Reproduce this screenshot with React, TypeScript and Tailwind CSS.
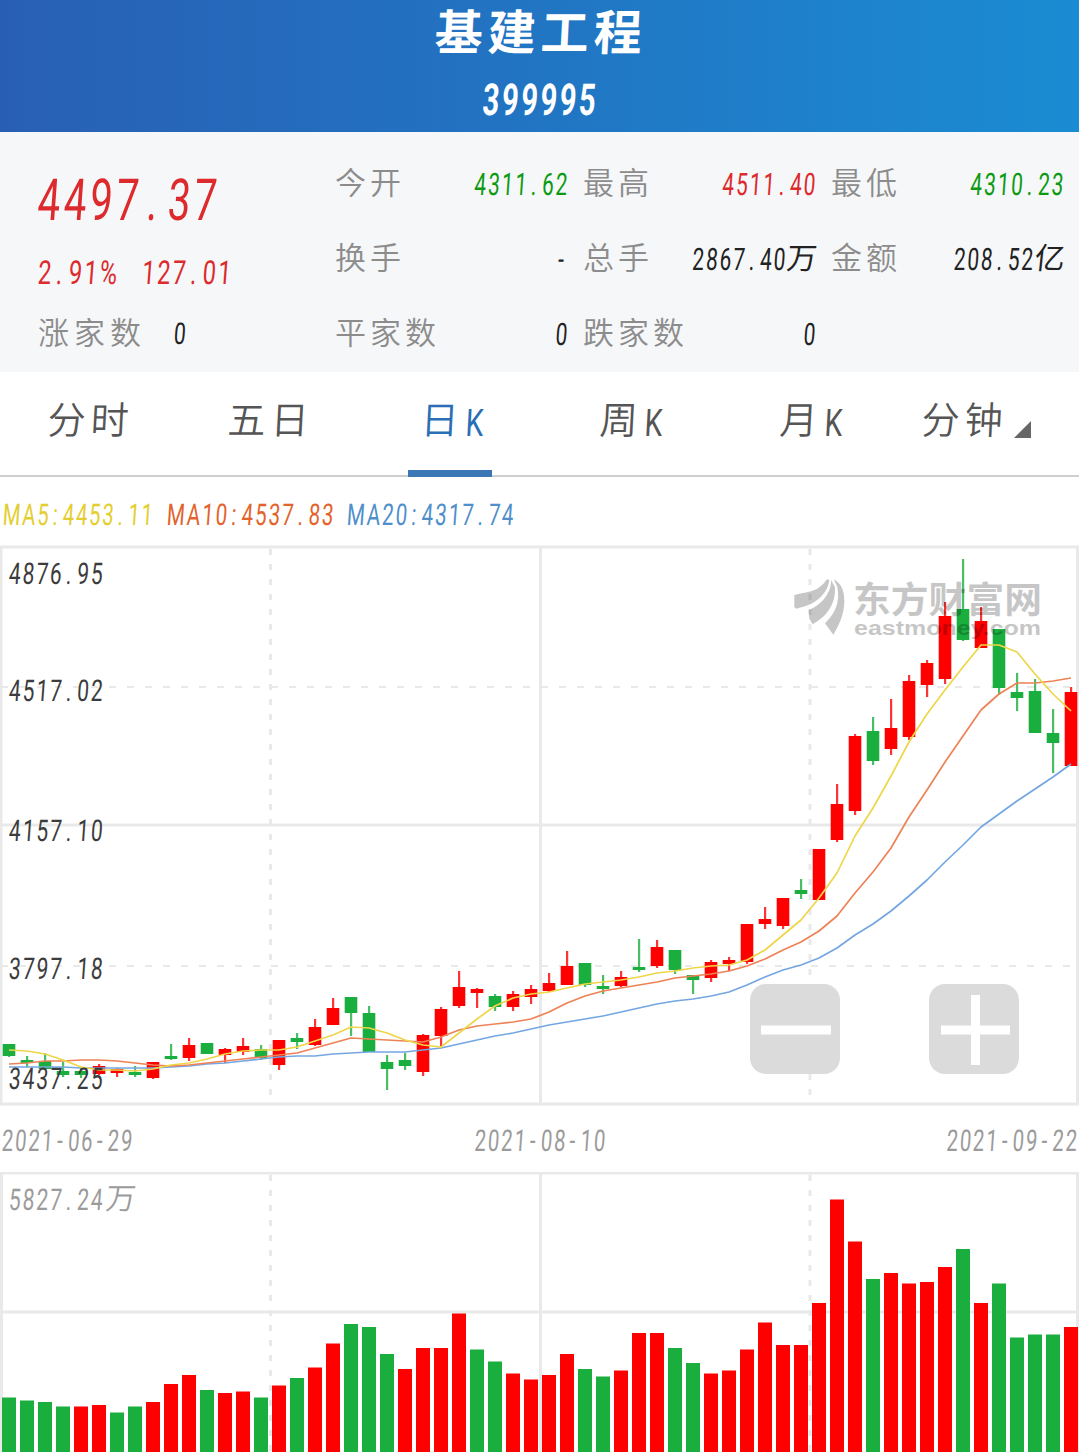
import { Fragment } from "react";
import clsx from "clsx";

type Candle = [color: string, high: number, top: number, bottom: number, low: number];

const RED = "#fe0000";
const GREEN = "#1aae3f";
const STEP = 18;

// y positions inside the page, one row per trading day
const candles: Candle[] = [
  ["G", 1044, 1044, 1056, 1057], ["G", 1056, 1060, 1063, 1067], ["G", 1053, 1061, 1069, 1069],
  ["G", 1062, 1071, 1075, 1077], ["G", 1067, 1071, 1075, 1078], ["R", 1064, 1066, 1074, 1075],
  ["R", 1068, 1069, 1073, 1077], ["G", 1066, 1072, 1075, 1077], ["R", 1062, 1062, 1078, 1079],
  ["G", 1044, 1056, 1059, 1060], ["R", 1038, 1045, 1058, 1061], ["G", 1043, 1043, 1054, 1054],
  ["R", 1048, 1049, 1055, 1063], ["R", 1038, 1046, 1052, 1055], ["G", 1045, 1049, 1058, 1060],
  ["R", 1040, 1040, 1065, 1070], ["G", 1033, 1038, 1042, 1049], ["R", 1019, 1027, 1045, 1046],
  ["R", 998, 1008, 1025, 1025], ["G", 997, 997, 1013, 1036], ["G", 1006, 1013, 1052, 1052],
  ["G", 1055, 1062, 1069, 1090], ["G", 1053, 1060, 1066, 1070], ["R", 1034, 1035, 1072, 1076],
  ["R", 1007, 1009, 1036, 1047], ["R", 971, 987, 1006, 1008], ["R", 988, 989, 993, 1008],
  ["G", 994, 996, 1007, 1011], ["R", 991, 994, 1007, 1011], ["R", 985, 989, 997, 1004],
  ["R", 973, 983, 991, 992], ["R", 951, 966, 985, 985], ["G", 963, 963, 985, 987],
  ["G", 975, 986, 989, 994], ["R", 971, 977, 986, 987], ["G", 939, 967, 970, 972],
  ["R", 940, 947, 966, 968], ["G", 950, 950, 970, 974], ["G", 975, 975, 980, 994],
  ["R", 960, 962, 978, 982], ["R", 957, 960, 964, 971], ["R", 924, 924, 962, 964],
  ["R", 907, 919, 924, 929], ["R", 898, 898, 926, 929], ["G", 879, 890, 894, 899],
  ["R", 849, 849, 900, 900], ["R", 784, 804, 840, 842], ["R", 734, 736, 811, 815],
  ["G", 717, 731, 761, 765], ["R", 699, 728, 749, 755], ["R", 675, 681, 737, 740],
  ["R", 660, 663, 685, 697], ["R", 602, 616, 679, 684], ["G", 559, 609, 640, 641],
  ["R", 607, 621, 648, 648], ["G", 629, 629, 688, 695], ["G", 673, 692, 698, 711],
  ["G", 679, 691, 733, 733], ["G", 709, 733, 743, 773], ["R", 687, 692, 766, 766],
];

const ma5 = [
  1050, 1051, 1054, 1060, 1067, 1070, 1070, 1071, 1069, 1065, 1063, 1059, 1054, 1051, 1050,
  1050, 1047, 1041, 1035, 1027, 1028, 1033, 1040, 1045, 1047, 1033, 1019, 1006, 998, 994,
  992, 988, 984, 982, 980, 977, 973, 971, 968, 966, 965, 960, 950, 935, 920,
  898, 873, 836, 808, 776, 742, 714, 690, 667, 645, 645, 652, 674, 694, 711,
];
const ma10 = [
  1064, 1063, 1061, 1061, 1060, 1060, 1061, 1063, 1065, 1066, 1065, 1063, 1061, 1059, 1057,
  1055, 1053, 1048, 1043, 1038, 1039, 1040, 1041, 1042, 1037, 1030, 1026, 1024, 1022, 1019,
  1012, 1003, 996, 991, 988, 985, 982, 978, 976, 974, 971, 966, 959, 950, 942,
  931, 916, 893, 872, 848, 817, 790, 762, 736, 710, 694, 683, 683, 681, 678,
];
const ma20 = [
  1067, 1067, 1067, 1067, 1068, 1068, 1068, 1068, 1068, 1067, 1066, 1064, 1063, 1061, 1059,
  1057, 1056, 1056, 1054, 1053, 1052, 1052, 1052, 1050, 1048, 1044, 1040, 1036, 1033, 1029,
  1025, 1022, 1019, 1016, 1012, 1008, 1004, 1001, 999, 996, 992, 985, 977, 970, 965,
  958, 948, 935, 924, 911, 896, 880, 862, 845, 827, 814, 801, 789, 777, 764,
];

const volumeColors = "GGGGRRGGRRRGRRGRGRRGGGRRRRGGRRRRGGRRRGGRRRRRRRRRGRRRRGRGGGGR";
const volumeTops = [
  1397.5, 1400.5, 1402, 1406.5, 1406.5, 1405, 1412.5, 1406.5, 1402, 1384, 1375, 1390, 1393, 1391.5, 1397.5,
  1385.5, 1378, 1367.5, 1343.5, 1324, 1327, 1354, 1369, 1348, 1348, 1313.5, 1349.5, 1361.5, 1373.5, 1379.5,
  1375, 1354, 1369, 1376.5, 1370.5, 1333, 1333, 1348, 1363, 1373.5, 1370.5, 1349.5, 1322.5, 1345, 1345,
  1303, 1199.5, 1241.5, 1279, 1273, 1283.5, 1282, 1267, 1249, 1303, 1283.5, 1337.5, 1334.5, 1334.5, 1327,
];

const stats = [
  { label: "今开", value: "4311.62", color: "text-[#0c9a12]" },
  { label: "最高", value: "4511.40", color: "text-[#dc2a2d]" },
  { label: "最低", value: "4310.23", color: "text-[#0c9a12]" },
  { label: "换手", value: "-", color: "text-[#222]" },
  { label: "总手", value: "2867.40", unit: "万", color: "text-[#222]" },
  { label: "金额", value: "208.52", unit: "亿", color: "text-[#222]" },
  { label: "平家数", value: "0", color: "text-[#222]" },
  { label: "跌家数", value: "0", color: "text-[#222]" },
];

const tabs = ["分时", "五日", "日K", "周K", "月K", "分钟"];

const priceLabels = [
  { text: "4876.95", pos: "top-[14px]" },
  { text: "4517.02", pos: "top-[131px]" },
  { text: "4157.10", pos: "top-[271px]" },
  { text: "3797.18", pos: "top-[409px]" },
  { text: "3437.25", pos: "top-[519px]" },
];

const xAt = (i: number) => 9 + i * STEP;
const toPoints = (ys: number[]) => ys.map((y, i) => `${xAt(i)},${y}`).join(" ");

// Narrow slanted digits; punctuation takes as much room as a digit
const Num = ({ text, className }: { text: string; className?: string }) => (
  <span
    className={clsx(
      "inline-block whitespace-nowrap -skew-x-6 font-[Roboto,sans-serif] leading-none tracking-[0.09em]",
      className
    )}
  >
    {text.split(/([.:-])/).map((part, i) => (
      <Fragment key={i}>
        {/^[.:-]$/.test(part) ? <span className="pr-[0.17em] pl-[0.12em]">{part}</span> : part}
      </Fragment>
    ))}
  </span>
);

const Header = () => (
  <header className="flex h-[132px] flex-col items-center bg-linear-to-r from-[#285fb4] via-[#2175c3] to-[#1a8cd3] text-white">
    <h1 className="-skew-x-3 pl-1 text-[48px] leading-[58px] font-bold tracking-[5px]">
      基建工程
    </h1>
    <Num text="399995" className="mt-[20px] ml-[3px] scale-x-[0.66] text-[44px] font-bold" />
  </header>
);

const Quote = () => (
  <section className="flex h-[240px] bg-[#f6f7f9]">
    <div className="flex w-[335px] flex-col pl-[38px] text-[#dc2a2d]">
      <Num text="4497.37" className="mt-[39px] origin-left scale-x-[0.69] text-[58px]" />
      <div className="mt-[27px] flex">
        <Num text="2.91%" className="w-[104px] origin-left scale-x-[0.72] text-[33px]" />
        <Num text="127.01" className="origin-left scale-x-[0.71] text-[33px]" />
      </div>
      <div className="mt-[22px] flex items-center text-[#222]">
        <span className="w-[136px] text-[31px] leading-[40px] font-[350] tracking-[5px] text-[#8c8c8c]">
          涨家数
        </span>
        <Num text="0" className="mt-[6px] origin-left scale-x-[0.7] text-[30px]" />
      </div>
    </div>
    <div className="grid h-[226px] w-[730px] grid-cols-3 gap-x-[14px] pt-[11px]">
      {stats.map((s) => (
        <div key={s.label} className="flex h-[75px] items-center justify-between">
          <span className="w-0 text-[31px] leading-none font-[350] tracking-[4px] whitespace-nowrap text-[#8c8c8c]">
            {s.label}
          </span>
          <span className={clsx("flex items-center", s.color)}>
            <Num text={s.value} className="mt-[8px] origin-right scale-x-[0.67] text-[31px]" />
            {s.unit && <span className="-skew-x-6 text-[30px] leading-none">{s.unit}</span>}
          </span>
        </div>
      ))}
    </div>
  </section>
);

const Tabs = () => (
  <nav className="grid h-[105px] grid-cols-6 border-b-2 border-[#cfcfcf] bg-white text-[#555]">
    {tabs.map((tab) => (
      <div
        key={tab}
        className={clsx(
          "relative flex justify-center pt-[24px] text-[38px] leading-[44px] font-[350] tracking-[5px]",
          tab === "日K" && "text-[#2a6fb5]",
          tab.includes("K") && "pl-[14px]",
          tab === "分钟" && "pr-[50px]"
        )}
      >
        <span className="-skew-x-3">
          {tab.replace("K", "")}
          {tab.includes("K") && (
            <span className="ml-[2px] inline-block origin-left scale-x-[0.75] translate-y-[2px] font-[Roboto,sans-serif] font-normal">K</span>
          )}
        </span>
        {tab === "日K" && (
          <span className="absolute -bottom-[2px] left-1/2 h-[7px] w-[84px] -translate-x-1/2 bg-[#3b77b5]" />
        )}
        {tab === "分钟" && (
          <svg className="absolute top-[49px] right-[48px] h-[17px] w-[17px]" viewBox="0 0 17 17">
            <path d="M17 0V17H0Z" fill="#666" />
          </svg>
        )}
      </div>
    ))}
  </nav>
);

const Averages = () => (
  <div className="flex h-[68px] items-center bg-white pt-[8px] pl-[3px]">
    <Num text="MA5:4453.11" className="w-[164px] origin-left scale-x-[0.67] text-[30px] text-[#e4ce2f]" />
    <Num text="MA10:4537.83" className="w-[180px] origin-left scale-x-[0.685] text-[30px] text-[#e2642c]" />
    <Num text="MA20:4317.74" className="origin-left scale-x-[0.685] text-[30px] text-[#4f8fcb]" />
  </div>
);

const Watermark = () => (
  <g fill="#000" opacity="0.22">
    <g transform="translate(785 570) scale(0.3333)">
      <path d="M28 76C62 64 96 72 126 28L133 30C130 62 104 92 72 104C58 109 46 112 34 116L28 112Z" />
      <path d="M138 30C140 66 112 104 71 120L73 146L83 163C124 140 152 106 150 52Z" />
      <path d="M146 28C166 38 178 58 178 92C178 134 162 164 145 194L120 160C150 130 166 98 157 50Z" />
    </g>
    <text x="853" y="613" textLength="189" lengthAdjust="spacingAndGlyphs" className="font-['Noto_Sans_CJK_SC',sans-serif] text-[36px] font-bold">
      东方财富网
    </text>
    <text x="854" y="635" textLength="187" lengthAdjust="spacingAndGlyphs" className="font-['Liberation_Sans',sans-serif] text-[20px] font-bold">
      eastmoney.com
    </text>
  </g>
);

const PriceChart = () => (
  <section className="relative h-[561px] bg-white">
    <svg className="block h-full w-full" viewBox="0 545 1079 561">
      <g stroke="#e9e9e9" strokeWidth="3" fill="none">
        <rect x="1" y="547" width="1076.5" height="557" />
        <path d="M540.5 547V1104M1 825H1078" />
        <path d="M270.5 549V1104M810 549V1104" strokeDasharray="6 9" />
        <path d="M1 687H1078M1 966H1078" strokeWidth="2" strokeDasharray="7 11" />
      </g>
      {candles.map(([color, high, top, bottom, low], i) => (
        <g key={i} fill={color === "R" ? RED : GREEN}>
          <rect x={xAt(i) - 1} y={high} width="2.2" height={low - high} opacity="0.8" />
          <rect x={xAt(i) - 6.3} y={top} width="12.6" height={bottom - top} />
        </g>
      ))}
      <g fill="none" strokeWidth="1.7" strokeLinejoin="round">
        <polyline points={toPoints(ma20)} stroke="#74a6e2" />
        <polyline points={toPoints(ma10)} stroke="#ee8257" />
        <polyline points={toPoints(ma5)} stroke="#eed648" />
      </g>
      <Watermark />
    </svg>
    {priceLabels.map((l) => (
      <Num
        key={l.text}
        text={l.text}
        className={clsx("absolute left-[9px] origin-left scale-x-[0.7] text-[30px] text-[#3c3c3c]", l.pos)}
      />
    ))}
    <button className="absolute top-[439px] left-[750px] h-[90px] w-[90px] rounded-2xl bg-[#dadada]/97">
      <svg viewBox="0 0 90 90">
        <path d="M11 46H81" stroke="#fff" strokeWidth="9" />
      </svg>
    </button>
    <button className="absolute top-[439px] left-[929px] h-[90px] w-[90px] rounded-2xl bg-[#dadada]/97">
      <svg viewBox="0 0 90 90">
        <path d="M12 46H81M46.5 11V81" stroke="#fff" strokeWidth="9" />
      </svg>
    </button>
  </section>
);

const Dates = () => (
  <div className="flex h-[66px] items-center justify-between bg-white pt-1 pl-[2px] text-[30px] text-[#9b9b9b]">
    <Num text="2021-06-29" className="origin-left scale-x-[0.675]" />
    <Num text="2021-08-10" className="scale-x-[0.675]" />
    <Num text="2021-09-22" className="origin-right scale-x-[0.675]" />
  </div>
);

const VolumeChart = () => (
  <section className="relative h-[284px] bg-white">
    <svg className="block h-full w-full" viewBox="0 1172 1079 284">
      <g stroke="#e9e9e9" strokeWidth="3" fill="none">
        <path d="M1.5 1452V1173H1077.5V1452M540.5 1173V1452M1 1312H1078" />
        <path d="M270.5 1175V1452M810 1175V1452" strokeDasharray="6 9" />
      </g>
      {volumeTops.map((top, i) => (
        <rect
          key={i}
          x={xAt(i) - 7}
          y={top}
          width="14"
          height={1452 - top}
          fill={volumeColors[i] === "R" ? RED : GREEN}
        />
      ))}
    </svg>
    <div className="absolute top-[7px] left-[9px] flex items-center text-[30px] leading-[34px] text-[#9b9b9b]">
      <Num text="5827.24" className="mt-[6px] w-[97px] origin-left scale-x-[0.7]" />
      <span className="-translate-y-px -skew-x-6 font-[350]">万</span>
    </div>
  </section>
);

export default function App() {
  return (
    <main className="h-[1456px] w-[1079px] overflow-hidden bg-white font-['Noto_Sans_CJK_SC',sans-serif]">
      <Header />
      <Quote />
      <Tabs />
      <Averages />
      <PriceChart />
      <Dates />
      <VolumeChart />
    </main>
  );
}
